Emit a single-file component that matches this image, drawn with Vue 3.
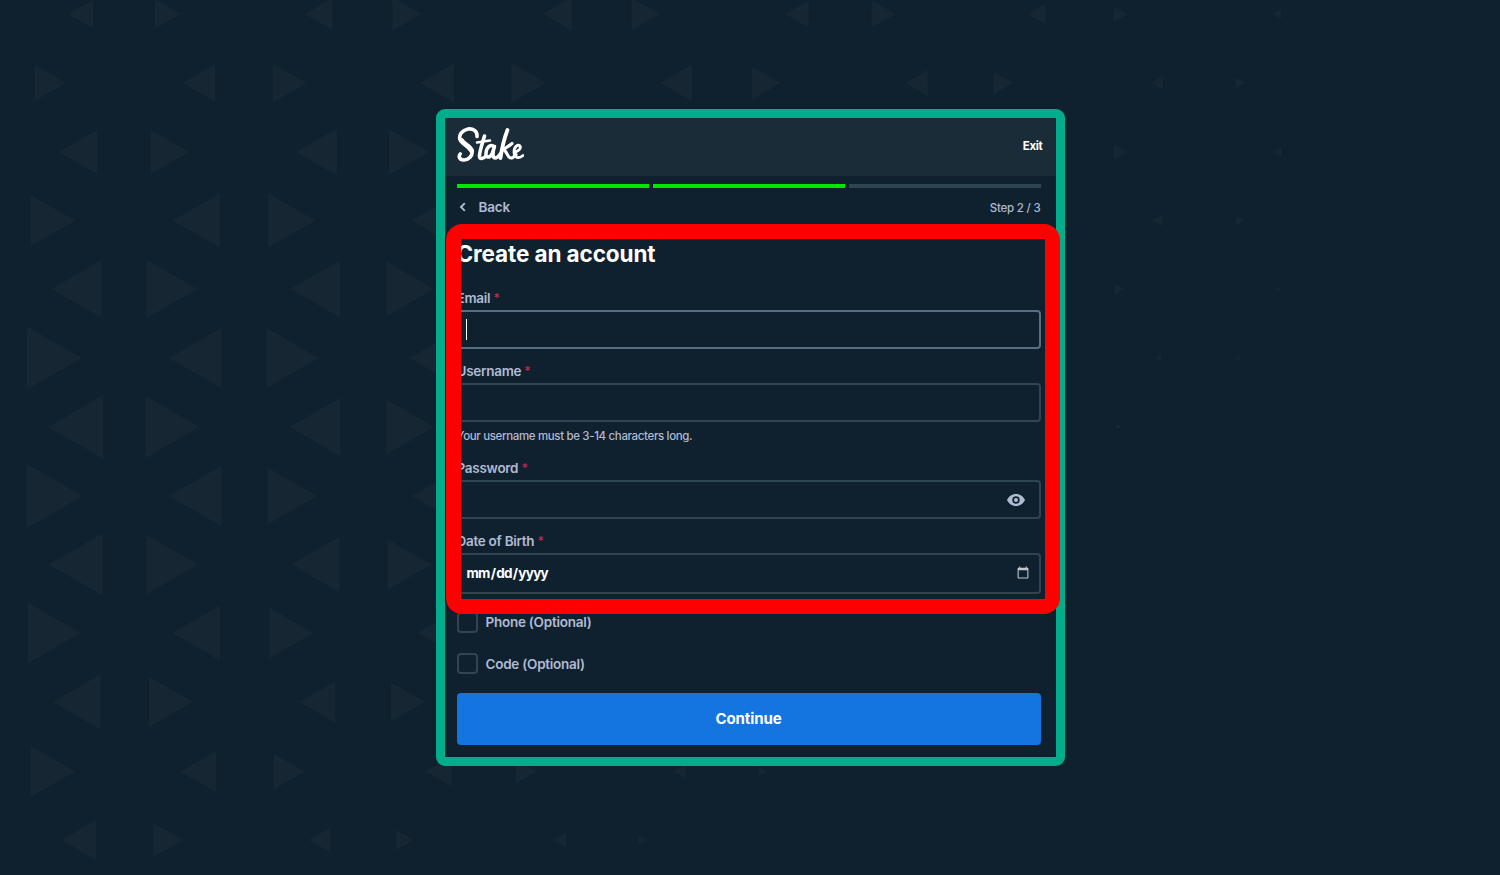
<script setup>
const PERIOD = 238.7
const rows = [
  { y: 14, odd: true, w: [25, 26, 28, 29, 29, 28, 24, 24, 18, 14, 9] },
  { y: 83, odd: false, w: [31, 33, 34, 34, 35, 32, 29, 23, 20, 12, 10] },
  { y: 152, odd: true, w: [39, 39, 41, 40, 0, 0, 0, 0, 0, 14, 9] },
  { y: 220.5, odd: false, w: [45, 47, 47, 47, 0, 0, 0, 0, 0, 10, 8] },
  { y: 289, odd: true, w: [50, 51, 50, 48, 0, 0, 0, 0, 0, 10, 5] },
  { y: 358, odd: false, w: [55, 53, 52, 50, 0, 0, 0, 0, 0, 6, 4] },
  { y: 427, odd: true, w: [55, 54, 51, 48, 0, 0, 0, 0, 0, 5, 3] },
  { y: 496, odd: false, w: [56, 53, 50, 47] },
  { y: 564.5, odd: true, w: [54, 52, 48, 44] },
  { y: 633, odd: false, w: [53, 48, 44, 38] },
  { y: 702, odd: true, w: [48, 44, 36, 34] },
  { y: 771.5, odd: false, w: [45, 36, 31, 26, 21, 12, 8] },
  { y: 840, odd: true, w: [35, 30, 22, 18, 13, 9, 3] }
]

// A row is a run of left/right pairs; each triangle is scaled about its centroid.
function triangle(y, width, index, odd) {
  const k = Math.floor(index / 2)
  const first = index % 2 === 0
  const pointsLeft = odd ? first : !first
  const base = odd ? (first ? 84.7 : 163.4) : first ? 45.3 : 204.2
  const cx = base + k * PERIOD
  const half = width / 1.732
  if (pointsLeft) {
    return `${cx - (2 * width) / 3},${y} ${cx + width / 3},${y - half} ${cx + width / 3},${y + half}`
  }
  return `${cx + (2 * width) / 3},${y} ${cx - width / 3},${y - half} ${cx - width / 3},${y + half}`
}

const triangles = rows.flatMap((row) =>
  row.w.map((width, index) => (width ? triangle(row.y, width, index, row.odd) : null)).filter(Boolean)
)

const segments = [true, true, false]
</script>

<template>
  <div class="page">
    <svg class="pattern" width="1500" height="875" viewBox="0 0 1500 875" aria-hidden="true">
      <polygon v-for="(points, i) in triangles" :key="i" :points="points" />
    </svg>

    <main class="card">
      <header class="top">
        <svg class="logo" width="67" height="35" viewBox="0 0 67 35" role="img" aria-label="Stake">
          <g fill="none" stroke="#fff" stroke-linecap="round" stroke-linejoin="round">
            <path stroke-width="3.600" d="M20 9.500C20.500 4 16 1.200 11 2C5 3.200 1.800 8 2.800 12C4 17 13.500 18.500 15 24C16 29 11 33.300 6.500 33C2.500 32.800 1.200 29.500 3.200 27" />
            <path stroke-width="5" d="M4.500 13.500C6.500 17 12.500 19 14.500 23.500" />
            <path stroke-width="3.600" d="M27.500 9C25.500 16 22 26 22.500 29.500C23 32.500 26 32 29 29" />
            <path stroke-width="2.600" d="M20 15.500L33 13.500" />
            <path stroke-width="3.500" d="M37 20C34 16.500 29.500 20 29 26C28.500 31 32 31.500 35 27L37.500 19.500C36 24 35 31 38 31C40 31 42 29 44 26" />
            <path stroke-width="3.800" d="M50.500 3C47 12 44.500 24 43.500 31" />
            <path stroke-width="3.200" d="M55 16.500C52 19 49 21 46 22.500C50 23 50 31 54 31C56 31 57.500 29.500 59 27.500" />
            <path stroke-width="2.800" d="M57.500 25C61 24.500 64.500 21.500 63 19C61 17 57 19.500 57 25C57 31 62 32 66 28.500" />
          </g>
        </svg>
        <button class="exit" type="button">Exit</button>
      </header>

      <section class="body">
        <div class="steps">
          <span v-for="(done, i) in segments" :key="i" class="segment" :class="{ done }"></span>
        </div>

        <div class="nav">
          <button class="back" type="button">
            <svg width="8" height="10" viewBox="0 0 8 10" aria-hidden="true">
              <path d="M5.800 1.200L2 5l3.800 3.800" fill="none" stroke="#b1bad3" stroke-width="1.900" />
            </svg>
            <span>Back</span>
          </button>
          <span class="step">Step 2 / 3</span>
        </div>

        <h1 class="title">Create an account</h1>

        <label class="label first">Email <i>*</i></label>
        <div class="control">
          <input class="input focus" type="text" />
          <span class="caret"></span>
        </div>

        <label class="label">Username <i>*</i></label>
        <div class="control"><input class="input" type="text" /></div>
        <p class="hint">Your username must be 3-14 characters long.</p>

        <label class="label after-hint">Password <i>*</i></label>
        <div class="control">
          <input class="input" type="password" />
          <svg class="eye" width="18" height="12" viewBox="0 0 18 12" aria-hidden="true">
            <path fill="#b1bad3" fill-rule="evenodd" d="M9 0C4.800 0 1.600 2.600 0 6c1.600 3.400 4.800 6 9 6s7.400-2.600 9-6c-1.600-3.400-4.800-6-9-6zm0 2.300a3.700 3.700 0 1 1 0 7.400 3.700 3.700 0 0 1 0-7.400z" />
            <circle cx="9" cy="6" r="2" fill="#b1bad3" />
          </svg>
        </div>

        <label class="label">Date of Birth <i>*</i></label>
        <div class="control"><input class="input date" type="date" /></div>

        <label class="check first-check"><input type="checkbox" /><span>Phone (Optional)</span></label>
        <label class="check next-check"><input type="checkbox" /><span>Code (Optional)</span></label>

        <button class="continue" type="button">Continue</button>
      </section>

      <div class="highlight"></div>
    </main>
  </div>
</template>

<style>
body {
  background: #0f212e;
}
</style>

<style scoped>
.page {
  position: relative;
  display: flex;
  align-items: center;
  justify-content: center;
  height: 875px;
  overflow: hidden;
  background: #0f212e;
  font-family: Inter, "Liberation Sans", sans-serif;
}
.pattern {
  position: absolute;
  inset: 0;
}
.pattern polygon {
  fill: #162632;
}
.card {
  position: relative;
  box-sizing: border-box;
  width: 629px;
  border: 9px solid #02ad8b;
  border-radius: 9px;
  background: #0f212e;
}
.top {
  display: flex;
  align-items: center;
  justify-content: space-between;
  height: 58px;
  padding: 0 13px 0 12px;
  background: #1a2c38;
}
.logo {
  display: block;
  margin-bottom: 5px;
}
.exit {
  padding: 0 0 3px;
  border: 0;
  background: none;
  color: #fff;
  font: 700 11.500px/14px Inter, sans-serif;
  letter-spacing: -0.3px;
}
.body {
  display: flex;
  flex-direction: column;
  padding: 8px 15px 12px 12px;
}
.steps {
  display: flex;
  gap: 4px;
}
.segment {
  flex: 1;
  height: 4px;
  background: #2f4553;
}
.segment.done {
  background: #00e700;
}
.nav {
  display: flex;
  align-items: center;
  justify-content: space-between;
  height: 22px;
  margin-top: 8px;
}
.back {
  display: flex;
  align-items: center;
  gap: 12px;
  padding: 0 0 0 2px;
  border: 0;
  background: none;
  color: #b1bad3;
  font: 600 13.500px/22px Inter, sans-serif;
  letter-spacing: -0.2px;
}
.step {
  padding-top: 2px;
  color: #b1bad3;
  font-size: 11.500px;
  font-weight: 500;
  letter-spacing: -0.2px;
}
.title {
  margin: 23px 0 0;
  color: #fff;
  font-size: 22.500px;
  font-weight: 700;
  line-height: 26px;
  letter-spacing: -0.1px;
}
.label {
  height: 18px;
  margin-top: 13px;
  color: #b1bad3;
  font-size: 13.500px;
  font-weight: 600;
  line-height: 18px;
  letter-spacing: -0.28px;
}
.label.first {
  margin-top: 22px;
}
.label.after-hint {
  margin-top: 14px;
}
.label i {
  color: #c0264f;
  font-style: normal;
  font-size: 12px;
  vertical-align: 1px;
}
.control {
  position: relative;
  margin-top: 3px;
}
.input {
  display: block;
  box-sizing: border-box;
  width: 100%;
  height: 39px;
  padding: 0 8px;
  border: 2px solid #2f4553;
  border-radius: 4px;
  outline: 0;
  background: #0f212e;
  color: #fff;
  font-family: inherit;
}
.input.focus {
  border-color: #557086;
}
.input.date {
  height: 41px;
  padding: 0 7px 2px;
  color-scheme: dark;
  font-size: 13.500px;
  font-weight: 700;
  letter-spacing: -0.72px;
}
.input.date::-webkit-calendar-picker-indicator {
  opacity: 0.75;
}
.caret {
  position: absolute;
  top: 9px;
  left: 9px;
  width: 1px;
  height: 21px;
  background: #fff;
}
.eye {
  position: absolute;
  top: 14px;
  right: 16px;
}
.hint {
  height: 18px;
  margin: 5px 0 0;
  color: #b1bad3;
  font-size: 11.500px;
  font-weight: 500;
  line-height: 18px;
  letter-spacing: -0.35px;
}
.check {
  display: flex;
  align-items: center;
  gap: 8px;
  height: 21px;
  color: #b1bad3;
  font-size: 13.500px;
  font-weight: 600;
  letter-spacing: -0.25px;
}
.first-check {
  margin-top: 18px;
}
.first-check span {
  padding-bottom: 2px;
}
.next-check {
  margin-top: 20px;
}
.check input {
  box-sizing: border-box;
  width: 21px;
  height: 21px;
  margin: 0;
  border: 2px solid #2f4553;
  border-radius: 4px;
  appearance: none;
  background: #0f212e;
}
.continue {
  height: 52px;
  margin-top: 19px;
  padding: 0 0 2px;
  border: 0;
  border-radius: 4px;
  background: #1475e1;
  color: #fff;
  font: 700 15px/52px Inter, sans-serif;
  letter-spacing: -0.1px;
}
.highlight {
  position: absolute;
  top: 106px;
  left: 1px;
  box-sizing: border-box;
  width: 614px;
  height: 390px;
  border: 15px solid #f00;
  border-radius: 16px;
  pointer-events: none;
}
</style>
